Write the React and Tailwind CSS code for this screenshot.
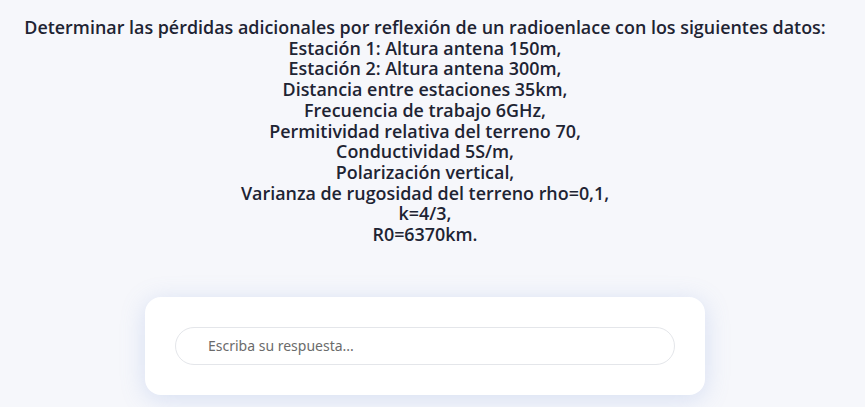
export default function App() {
  const lines = [
    "Determinar las pérdidas adicionales por reflexión de un radioenlace con los siguientes datos:",
    "Estación 1: Altura antena 150m,",
    "Estación 2: Altura antena 300m,",
    "Distancia entre estaciones 35km,",
    "Frecuencia de trabajo 6GHz,",
    "Permitividad relativa del terreno 70,",
    "Conductividad 5S/m,",
    "Polarización vertical,",
    "Varianza de rugosidad del terreno rho=0,1,",
    "k=4/3,",
    "R0=6370km.",
  ];

  return (
    <div className="min-h-screen bg-[#f6f7fb] pt-[17px] pr-[15px] font-['Open_Sans',sans-serif]">
      {/* Enunciado */}
      <p className="text-center text-[17.9px] leading-[20.7px] font-semibold text-[#1e2433]">
        {lines.map((l, i) => (
          <span key={l}>
            {l}
            {i < lines.length - 1 && <br />}
          </span>
        ))}
      </p>

      {/* Respuesta */}
      <div className="mx-auto mt-[52px] w-[560px] rounded-2xl bg-white p-[30px] shadow-[0_4px_24px_rgba(120,150,220,0.25)]">
        <input
          type="text"
          placeholder="Escriba su respuesta..."
          className="h-[38px] w-full rounded-full border border-[#e4e6ea] bg-white pl-8 pr-4 font-['Noto_Sans',sans-serif] text-[14px] text-[#333] placeholder:text-[#6b6b6b] outline-none"
        />
      </div>
    </div>
  );
}
